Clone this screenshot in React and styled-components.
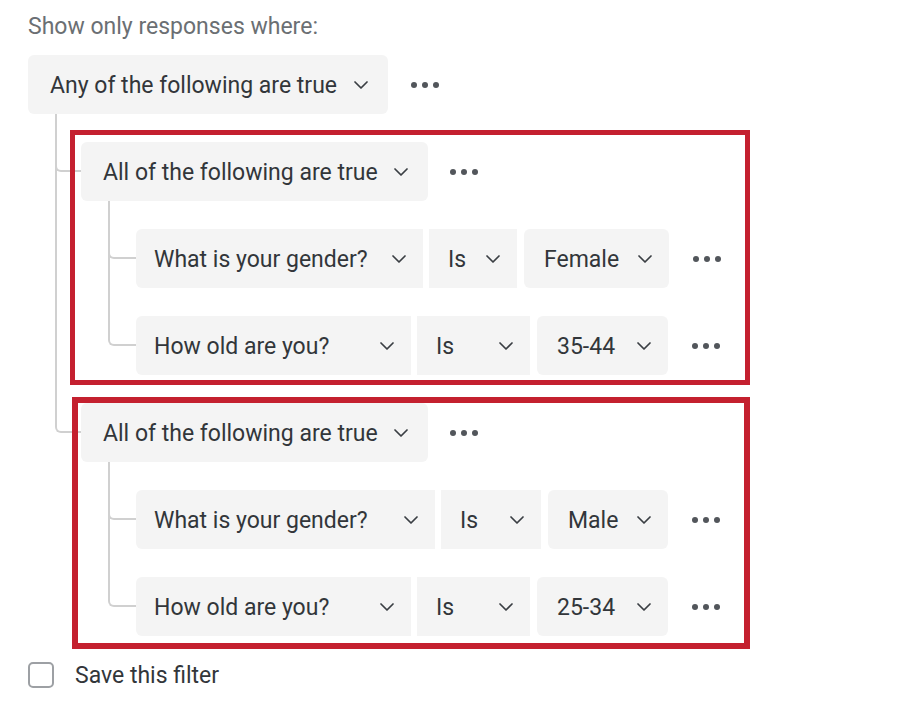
import React from "react";
import styled, { createGlobalStyle, css } from "styled-components";

const GlobalStyle = createGlobalStyle`
  html, body { margin: 0; padding: 0; background: #ffffff; }
  body { font-family: Roboto, "Liberation Sans", Arial, sans-serif; }
`;

const Page = styled.div`
  padding: 13px 0 0 28px;
  font-family: Roboto, "Liberation Sans", Arial, sans-serif;
  color: #32363a;
`;

const Title = styled.div`
  font-size: 23px;
  line-height: 28px;
  color: #6b6f73;
  margin-bottom: 14px;
`;

const NodeRow = styled.div`
  display: flex;
  align-items: center;
  height: 59px;
`;

const shapes = {
  round: css`border-radius: 6px;`,
  left: css`border-radius: 6px 0 0 6px;`,
  flat: css`border-radius: 0;`,
};

const SelectBox = styled.div`
  display: flex;
  align-items: center;
  justify-content: space-between;
  box-sizing: border-box;
  flex: none;
  height: 59px;
  width: ${(p) => p.$w}px;
  margin-right: ${(p) => p.$mr || 0}px;
  padding: 0 ${(p) => p.$pr}px 0 ${(p) => p.$pl}px;
  background: #f4f4f4;
  ${(p) => shapes[p.$shape || "round"]}
  font-size: 23px;
  line-height: 28px;
  color: #32363a;
  white-space: nowrap;
`;

const Label = styled.span`
  padding-top: 3px;
`;

const ChevronSvg = styled.svg`
  flex: none;
  display: block;
  margin-top: 1px;
`;

const Chevron = () => (
  <ChevronSvg width="14" height="8" viewBox="0 0 14 8" aria-hidden="true">
    <polyline
      points="1,1 7,7 13,1"
      fill="none"
      stroke="#3a3e43"
      strokeWidth="1.7"
      strokeLinecap="round"
      strokeLinejoin="round"
    />
  </ChevronSvg>
);

const MoreButton = styled.div`
  display: flex;
  align-items: center;
  gap: 5px;
  margin-left: ${(p) => p.$ml}px;
`;

const Dot = styled.span`
  width: 6px;
  height: 6px;
  border-radius: 50%;
  background: #52565b;
`;

const More = ({ ml }) => (
  <MoreButton $ml={ml}>
    <Dot />
    <Dot />
    <Dot />
  </MoreButton>
);

const Select = ({ label, ...rest }) => (
  <SelectBox {...rest}>
    <Label>{label}</Label>
    <Chevron />
  </SelectBox>
);

const ChildList = styled.div`
  display: flex;
  flex-direction: column;
  gap: 28px;
  margin-top: 28px;
  padding-left: ${(p) => p.$indent}px;
`;

const ChildItem = styled.div`
  position: relative;

  &::before {
    content: "";
    position: absolute;
    box-sizing: border-box;
    left: ${(p) => 27 - p.$indent}px;
    top: -28px;
    width: ${(p) => p.$indent - 27}px;
    height: 58px;
    border-left: 2px solid #d0d0d0;
    border-bottom: 2px solid #d0d0d0;
    border-bottom-left-radius: 6px;
  }

  &:not(:last-child)::after {
    content: "";
    position: absolute;
    left: ${(p) => 27 - p.$indent}px;
    top: 0;
    bottom: 0;
    border-left: 2px solid #d0d0d0;
  }
`;

const Group = styled.div`
  position: relative;
`;

const Highlight = styled.div`
  position: absolute;
  box-sizing: border-box;
  pointer-events: none;
  z-index: 2;
  left: ${(p) => p.$l}px;
  top: ${(p) => p.$t}px;
  width: ${(p) => p.$w}px;
  height: ${(p) => p.$h}px;
  border: ${(p) => p.$b}px solid #c4202f;
`;

const ConditionRow = styled.div`
  display: flex;
  align-items: center;
  height: 59px;
`;

const CheckRow = styled.label`
  display: flex;
  align-items: center;
  gap: 21px;
  margin-top: 23px;
  font-size: 23px;
  line-height: 28px;
  color: #32363a;
`;

const CheckText = styled.span`
  padding-top: 3px;
`;

const CheckBox = styled.span`
  display: block;
  box-sizing: border-box;
  width: 26px;
  height: 26px;
  border: 2px solid #9da0a4;
  border-radius: 5px;
  background: #fff;
`;

const groups = [
  {
    hl: { l: -11, t: -12, w: 680, h: 255, b: 5 },
    rows: [
      { field: "What is your gender?", fw: 287, opw: 88, value: "Female", vw: 145 },
      { field: "How old are you?", fw: 275, opw: 113, value: "35-44", vw: 131 },
    ],
  },
  {
    hl: { l: -9, t: -6, w: 678, h: 252, b: 6 },
    rows: [
      { field: "What is your gender?", fw: 299, opw: 100, value: "Male", vw: 120 },
      { field: "How old are you?", fw: 275, opw: 113, value: "25-34", vw: 131 },
    ],
  },
];

export default function App() {
  return (
    <Page>
      <GlobalStyle />
      <Title>Show only responses where:</Title>
      <NodeRow>
        <Select label="Any of the following are true" $w={360} $pl={22} $pr={20} />
        <More ml={23} />
      </NodeRow>
      <ChildList $indent={53}>
        {groups.map((g, gi) => (
          <ChildItem key={gi} $indent={53}>
            <Group>
              <Highlight $l={g.hl.l} $t={g.hl.t} $w={g.hl.w} $h={g.hl.h} $b={g.hl.b} />
              <NodeRow>
                <Select label="All of the following are true" $w={347} $pl={22} $pr={20} />
                <More ml={22} />
              </NodeRow>
              <ChildList $indent={55}>
                {g.rows.map((r, ri) => (
                  <ChildItem key={ri} $indent={55}>
                    <ConditionRow>
                      <Select label={r.field} $w={r.fw} $pl={18} $pr={17} $shape="left" $mr={6} />
                      <Select label="Is" $w={r.opw} $pl={19} $pr={17} $shape="flat" $mr={7} />
                      <Select label={r.value} $w={r.vw} $pl={20} $pr={17} />
                      <More ml={24} />
                    </ConditionRow>
                  </ChildItem>
                ))}
              </ChildList>
            </Group>
          </ChildItem>
        ))}
      </ChildList>
      <CheckRow>
        <CheckBox />
        <CheckText>Save this filter</CheckText>
      </CheckRow>
    </Page>
  );
}
